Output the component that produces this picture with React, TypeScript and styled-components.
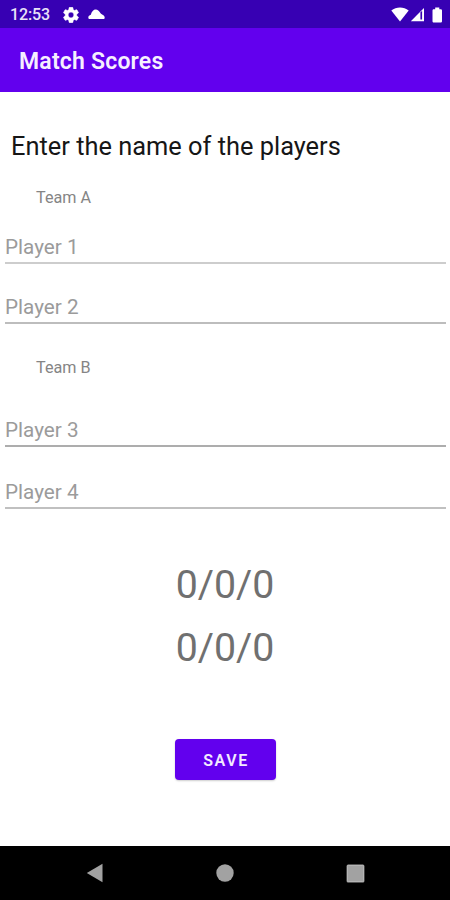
import React from 'react';
import styled, { createGlobalStyle } from 'styled-components';

const GlobalStyle = createGlobalStyle`
  * { box-sizing: border-box; }
  body { margin: 0; background: #fff; font-family: Roboto, "Liberation Sans", sans-serif; }
`;

const Screen = styled.div`
  width: 450px;
  height: 900px;
  display: flex;
  flex-direction: column;
  background: #fff;
  overflow: hidden;
`;

const StatusBar = styled.header`
  height: 28px;
  flex: none;
  display: flex;
  align-items: center;
  justify-content: space-between;
  padding: 1px 7px 0 10px;
  background: #3700b3;
  color: #fff;
`;

const StatusGroup = styled.div`
  display: flex;
  align-items: center;
`;

const Clock = styled.span`
  width: 53px;
  font-size: 16px;
  font-weight: 500;
  line-height: 28px;
  letter-spacing: -0.1px;
  color: #e9e2f8;
`;

const Glyph = styled.svg<{ $gap?: number }>`
  display: block;
  flex: none;
  margin-left: ${({ $gap = 0 }) => $gap}px;
`;

const AppBar = styled.div`
  height: 64px;
  flex: none;
  display: flex;
  align-items: center;
  padding: 4px 19px 0;
  background: #6200ee;
`;

const Title = styled.h1`
  margin: 0;
  font-size: 23px;
  font-weight: 600;
  line-height: 28px;
  letter-spacing: 0.2px;
  color: #f6efff;
`;

const Content = styled.main`
  flex: 1;
  display: flex;
  flex-direction: column;
`;

const Heading = styled.h2`
  margin: 38px 0 0 11px;
  font-size: 25.4px;
  font-weight: 400;
  line-height: 32px;
  color: #161616;
`;

const TeamLabel = styled.div<{ $top: number }>`
  margin: ${({ $top }) => $top}px 0 0 36px;
  font-size: 16.2px;
  line-height: 20px;
  height: 20px;
  color: #858585;
`;

const Field = styled.input<{ $top: number; $line: string }>`
  display: block;
  width: 441px;
  height: 32px;
  margin: ${({ $top }) => $top}px 0 0 5px;
  padding: 0 0 1px;
  border: 0;
  border-bottom: 2px solid ${({ $line }) => $line};
  border-radius: 0;
  outline: none;
  background: transparent;
  font: 400 20.7px Roboto, "Liberation Sans", sans-serif;
  color: #222;
  &::placeholder { color: #9b9b9b; opacity: 1; }
`;

const Scores = styled.section`
  margin-top: 45px;
  display: flex;
  flex-direction: column;
  align-items: center;
`;

const Score = styled.div`
  height: 63px;
  font-size: 39.3px;
  font-weight: 400;
  line-height: 63px;
  color: #707070;
`;

const SaveButton = styled.button`
  align-self: center;
  width: 101px;
  height: 41px;
  margin: 59px 0 0 1px;
  padding: 1px 0 0 1px;
  border: 0;
  border-radius: 4px;
  background: #6200ee;
  color: #f3eaff;
  font: 600 16px Roboto, "Liberation Sans", sans-serif;
  letter-spacing: 1.6px;
  box-shadow: 0 1px 2px rgba(0, 0, 0, 0.2);
`;

const NavBar = styled.nav`
  height: 54px;
  flex: none;
  display: grid;
  grid-template-columns: 130px 130px 130px;
  justify-content: center;
  align-items: center;
  justify-items: center;
  background: #000;
`;

export default function App() {
  return (
    <>
      <GlobalStyle />
      <Screen>
        <StatusBar>
          <StatusGroup>
            <Clock>12:53</Clock>
            <Glyph width="16" height="16" viewBox="2 2 20 20" fill="#fff" stroke="#fff" strokeWidth=".7">
              <path d="M19.14 12.94c.04-.3.06-.61.06-.94 0-.32-.02-.64-.07-.94l2.03-1.58c.18-.14.23-.41.12-.61l-1.92-3.32c-.12-.22-.37-.29-.59-.22l-2.39.96c-.5-.38-1.03-.7-1.62-.94l-.36-2.54c-.04-.24-.24-.41-.48-.41h-3.84c-.24 0-.43.17-.47.41l-.36 2.54c-.59.24-1.13.57-1.62.94l-2.39-.96c-.22-.08-.47 0-.59.22L2.74 8.87c-.12.21-.08.47.12.61l2.03 1.58c-.05.3-.09.63-.09.94s.02.64.07.94l-2.03 1.58c-.18.14-.23.41-.12.61l1.92 3.32c.12.22.37.29.59.22l2.39-.96c.5.38 1.03.7 1.62.94l.36 2.54c.05.24.24.41.48.41h3.84c.24 0 .44-.17.47-.41l.36-2.54c.59-.24 1.13-.56 1.62-.94l2.39.96c.22.08.47 0 .59-.22l1.92-3.32c.12-.22.07-.47-.12-.61l-2.01-1.58zM12 15.6c-1.98 0-3.6-1.62-3.6-3.6s1.62-3.6 3.6-3.6 3.6 1.62 3.6 3.6-1.62 3.6-3.6 3.6z" />
            </Glyph>
            <Glyph $gap={9} width="17" height="12" viewBox="0 0 17 12" fill="#fff">
              <path d="M2 10C.9 10 .3 9.500.3 8.500.3 7 1.500 6.100 2.800 5.700 3.700 2.500 5.500.500 7.700.500c2 0 3.300 1.400 4.500 3.300.7 1.100 1.600 1.500 2.800 2.300 1.100.7 1.700 1.500 1.700 2.600 0 .8-.5 1.300-1.400 1.300z" />
            </Glyph>
          </StatusGroup>
          <StatusGroup>
            <Glyph width="18" height="15" viewBox="0 0 18 15" fill="#fff">
              <path d="M9 14.500.3 3.500C5.300-.6 12.700-.6 17.700 3.500z" />
            </Glyph>
            <Glyph $gap={1} width="15" height="15" viewBox="0 0 15 15">
              <path d="M14 1v13.200H.8z" fill="#fff" />
              <path d="M10.400 5.500v7h1.700v-8.700z" fill="#3700b3" />
            </Glyph>
            <Glyph $gap={7} width="11" height="16" viewBox="0 0 11 16" fill="#fff">
              <path d="M3.200.5h4.100v1.700h1.300c.7 0 1.400.5 1.400 1.300v10.700c0 .8-.6 1.300-1.400 1.300H1.900C1.100 15.500.5 15 .5 14.200V3.500c0-.8.600-1.300 1.400-1.300h1.300z" />
            </Glyph>
          </StatusGroup>
        </StatusBar>
        <AppBar>
          <Title>Match Scores</Title>
        </AppBar>
        <Content>
          <Heading>Enter the name of the players</Heading>
          <TeamLabel $top={26}>Team A</TeamLabel>
          <Field $top={24} $line="#cdcdcd" placeholder="Player 1" />
          <Field $top={28} $line="#bdbdbd" placeholder="Player 2" />
          <TeamLabel $top={34}>Team B</TeamLabel>
          <Field $top={37} $line="#adadad" placeholder="Player 3" />
          <Field $top={30} $line="#c0c0c0" placeholder="Player 4" />
          <Scores>
            <Score>0/0/0</Score>
            <Score>0/0/0</Score>
          </Scores>
          <SaveButton>SAVE</SaveButton>
        </Content>
        <NavBar>
          <Glyph width="18" height="20" viewBox="0 0 18 20">
            <path d="M.8 10 16.500.8v18.400z" fill="#a2a2a2" />
          </Glyph>
          <Glyph width="18" height="18" viewBox="0 0 18 18">
            <circle cx="9" cy="9" r="8.700" fill="#a2a2a2" />
          </Glyph>
          <Glyph width="19" height="19" viewBox="0 0 19 19">
            <rect x=".6" y=".6" width="17.800" height="17.800" rx="1.500" fill="#a2a2a2" />
            <rect x="1.500" y="1.500" width="16" height="16" rx=".8" fill="none" stroke="#b4b4b4" />
          </Glyph>
        </NavBar>
      </Screen>
    </>
  );
}
